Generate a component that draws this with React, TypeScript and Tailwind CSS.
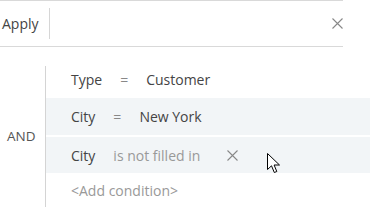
import React from 'react';

const font = { fontFamily: '"Open Sans", "Noto Sans", sans-serif' };

function Cross({ className }: { className?: string }) {
  return (
    <svg width="11" height="11" viewBox="0 0 11 11" className={className}>
      <path d="M0.5 0.5 L10.5 10.5 M10.5 0.5 L0.5 10.5" stroke="currentColor" strokeWidth="1.1" fill="none" />
    </svg>
  );
}

function Cursor() {
  return (
    <svg
      width="14"
      height="21"
      viewBox="0 0 14 21"
      className="absolute left-[267px] top-[153px]"
    >
      <path
        d="M0.5 0.5 L0.5 16.5 L4.5 12.8 L7.3 19.5 L9.8 18.5 L7.1 12 L12.5 12 Z"
        fill="#ffffff"
        stroke="#000000"
        strokeWidth="1"
        strokeLinejoin="miter"
      />
    </svg>
  );
}

export default function App() {
  return (
    <div className="relative w-[370px] h-[207px] bg-white overflow-hidden text-[14px]" style={font}>
      {/* search bar */}
      <div className="w-[343px] h-[47px] border-t border-b border-[#d9d9d9] flex items-center">
        <span className="pl-[2px] pr-[10px] text-[#444]">Apply</span>
        <div className="w-px h-[31px] bg-[#d6d6d6]" />
        <div className="flex-1" />
        <Cross className="text-[#888]" />
      </div>

      {/* conditions */}
      <div className="flex mt-[13px] h-[147px]">
        <div className="w-[46px] pt-[6px] flex">
          <div className="flex-1 border-r border-[#d4d4d4] flex items-center pl-[7px] text-[13.5px] text-[#555]">
            AND
          </div>
        </div>
        <div className="flex-1 flex flex-col">
          <div className="h-[38px] flex items-center gap-[18px] pl-[25px] text-[#444]">
            <span>Type</span>
            <span className="text-[#888]">=</span>
            <span>Customer</span>
          </div>
          <div className="h-[37px] bg-[#f2f5f7] flex items-center gap-[18px] pl-[25px] text-[#444]">
            <span>City</span>
            <span className="text-[#888]">=</span>
            <span>New York</span>
          </div>
          <div className="h-[2px]" />
          <div className="h-[36px] bg-[#f2f5f7] flex items-center pl-[25px] text-[#444]">
            <span>City</span>
            <span className="ml-[18px] text-[#999]">is not filled in</span>
            <Cross className="ml-[27px] text-[#888]" />
          </div>
          <div className="h-[34px] flex items-center pl-[25px] text-[#999]">
            &lt;Add condition&gt;
          </div>
        </div>
      </div>
      <Cursor />
    </div>
  );
}
